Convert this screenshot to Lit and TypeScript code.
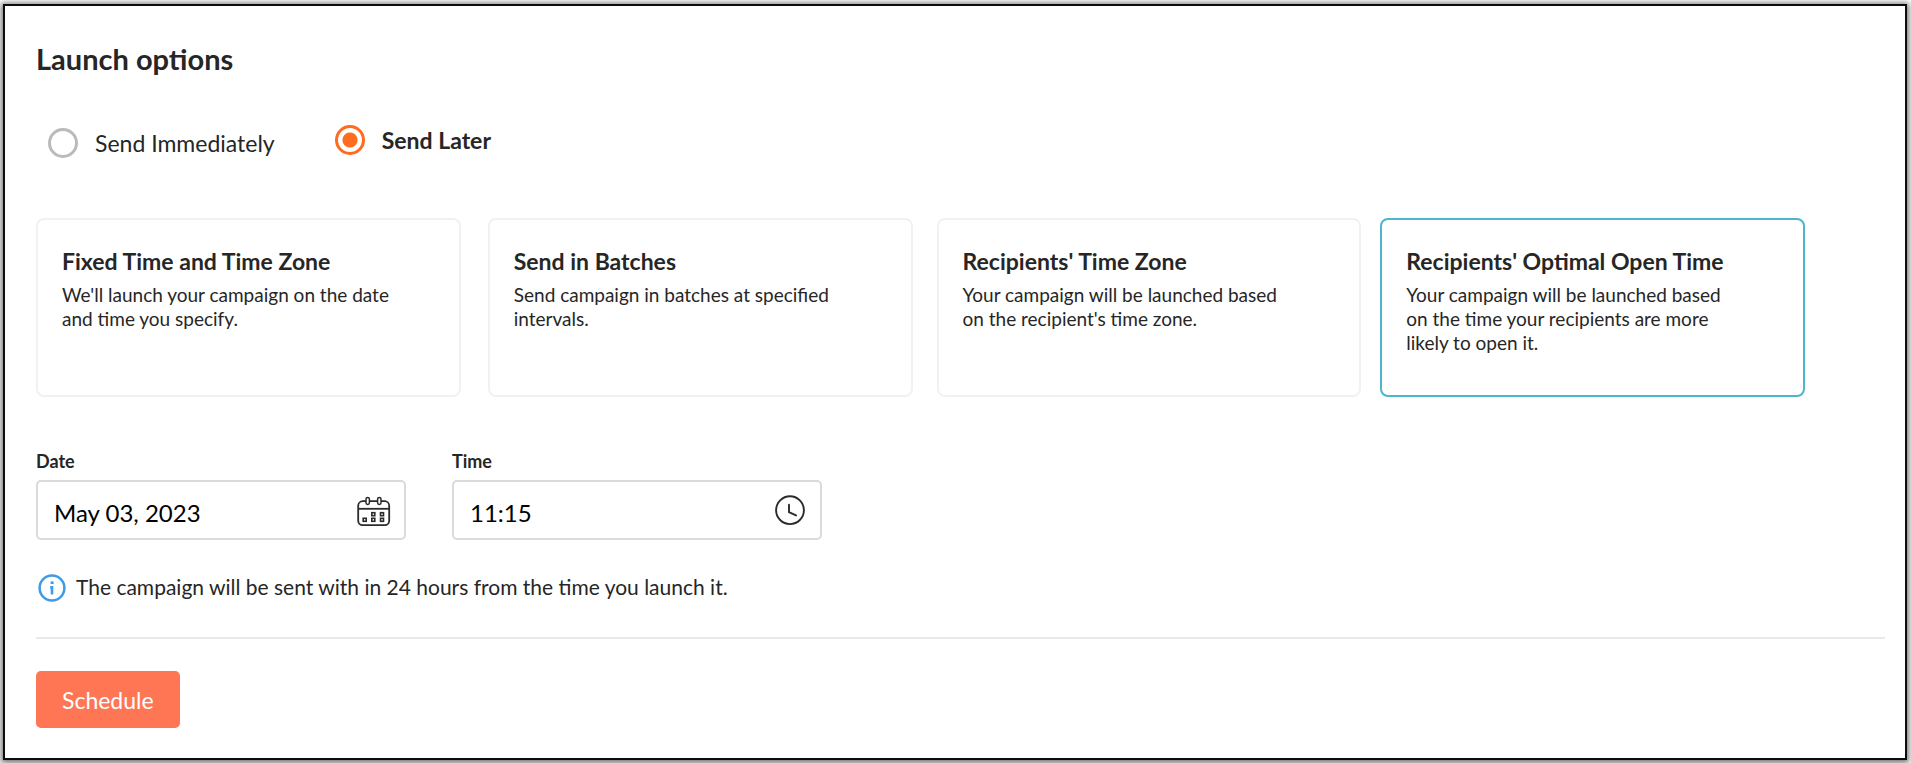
import { LitElement, html, css, svg } from "lit";
import { customElement, state } from "lit/decorators.js";
import { classMap } from "lit/directives/class-map.js";

interface LaunchMode {
  id: string;
  title: string;
  text: string;
}

const MODES: LaunchMode[] = [
  {
    id: "fixed",
    title: "Fixed Time and Time Zone",
    text: "We'll launch your campaign on the date and time you specify.",
  },
  {
    id: "batches",
    title: "Send in Batches",
    text: "Send campaign in batches at specified intervals.",
  },
  {
    id: "timezone",
    title: "Recipients' Time Zone",
    text: "Your campaign will be launched based on the recipient's time zone.",
  },
  {
    id: "optimal",
    title: "Recipients' Optimal Open Time",
    text: "Your campaign will be launched based on the time your recipients are more likely to open it.",
  },
];

const DAYS = [
  [16.3, 21.2],
  [25, 21.2],
  [7.7, 26.8],
  [16.3, 26.8],
  [25, 26.8],
];

const calendarIcon = html`
  <svg class="field-icon" viewBox="0 0 34 34" aria-hidden="true">
    <g fill="none" stroke="#2b2b2b" stroke-width="1.8">
      <rect x="1.2" y="8.2" width="31" height="24" rx="4.5" />
      <path d="M1.2 15.8H32.2" />
      <g fill="#fff" stroke-width="1.5">
        <rect x="9" y="4.4" width="3.4" height="7" rx="1.7" />
        <rect x="20.6" y="4.4" width="3.4" height="7" rx="1.7" />
      </g>
      ${DAYS.map(
        ([x, y]) => svg`<rect x=${x - 1.5} y=${y - 1.5} width="3" height="3" stroke-width="1.6" />`,
      )}
    </g>
  </svg>
`;

const clockIcon = html`
  <svg class="field-icon" viewBox="0 0 34 34" aria-hidden="true">
    <g fill="none" stroke="#2b2b2b" stroke-width="1.9" stroke-linecap="round">
      <circle cx="17" cy="17.2" r="13.9" />
      <path d="M16 11.8V19.2L23 22.4" />
    </g>
  </svg>
`;

const infoIcon = html`
  <svg class="info-icon" viewBox="0 0 28 28" aria-hidden="true">
    <circle cx="14" cy="14" r="12.4" fill="none" stroke="#3f9ae8" stroke-width="2.5" />
    <rect x="12.6" y="7.4" width="3" height="2.6" fill="#3f9ae8" />
    <path d="M12.2 13.4H14V20.6" fill="none" stroke="#3f9ae8" stroke-width="2.6" />
  </svg>
`;

@customElement("app-root")
export class AppRoot extends LitElement {
  @state() private when: "now" | "later" = "later";
  @state() private mode = "optimal";

  static styles = css`
    :host {
      display: block;
      font-family: Lato, "Liberation Sans", sans-serif;
      color: #262626;
      background: #fff;
      overflow: hidden;
    }
    * {
      box-sizing: border-box;
    }
    .panel {
      margin: 4px 4px 3px 3px;
      padding: 35px 20px 30px 31px;
      border: 2px solid #0c0c0c;
      background: #fff;
      box-shadow: 0 1px 6px 2px rgba(0, 0, 0, 0.55);
    }
    .heading {
      margin: 0;
      font-size: 29px;
      line-height: 36px;
      font-weight: 700;
    }
    .choices {
      display: flex;
      align-items: flex-start;
      flex-wrap: wrap;
      gap: 24px 49px;
      margin: 48px 0 0;
      padding: 0 0 0 9px;
      border: 0;
      min-height: 36px;
    }
    .choice {
      display: flex;
      align-items: center;
      gap: 17px;
      padding: 3px;
      font-size: 23px;
      line-height: 30px;
    }
    .choice.selected {
      padding: 0 8px;
      font-weight: 700;
    }
    .radio {
      appearance: none;
      flex: none;
      width: 30px;
      height: 30px;
      margin: 0;
      border: 3px solid #bababa;
      border-radius: 50%;
      background: #fff;
    }
    .radio:checked {
      border-color: #ff6b1f;
      background: radial-gradient(circle, #ff6b1f 7px, #fff 8px);
    }
    .modes {
      display: grid;
      grid-template-columns: 1fr 27px 1fr 24px 1fr 19px 1fr;
      margin: 57px 80px 0 0;
    }
    .mode {
      display: flex;
      flex-direction: column;
      gap: 8px;
      min-height: 179px;
      padding: 27px 60px 27px 24px;
      border: 2px solid #f1f1f1;
      border-radius: 8px;
      background: #fff;
      color: inherit;
      font: inherit;
      text-align: left;
      cursor: pointer;
    }
    .mode:nth-child(1) {
      grid-column: 1;
    }
    .mode:nth-child(2) {
      grid-column: 3;
    }
    .mode:nth-child(3) {
      grid-column: 5;
    }
    .mode:nth-child(4) {
      grid-column: 7;
    }
    .mode.selected {
      border-color: #4fb4cd;
    }
    .mode-title {
      font-size: 23px;
      line-height: 28px;
      font-weight: 700;
      white-space: nowrap;
    }
    .mode-text {
      font-size: 19px;
      line-height: 24px;
    }
    .fields {
      display: flex;
      flex-wrap: wrap;
      gap: 24px 46px;
      margin-top: 54px;
    }
    .field {
      display: flex;
      flex-direction: column;
      gap: 9px;
      width: 370px;
    }
    .label {
      font-size: 18px;
      line-height: 20px;
      font-weight: 700;
    }
    .box {
      display: flex;
      align-items: center;
      padding: 0 13px 0 16px;
      border: 2px solid #dadada;
      border-radius: 5px;
    }
    .input {
      flex: 1;
      min-width: 0;
      height: 56px;
      margin: 0;
      padding: 4px 0 0;
      border: 0;
      outline: 0;
      background: transparent;
      color: #000;
      font: inherit;
      font-size: 24px;
    }
    .field-icon {
      flex: none;
      width: 34px;
      height: 34px;
    }
    .note {
      display: flex;
      align-items: flex-end;
      gap: 10px;
      margin: 32px 0 0;
      padding-left: 2px;
      font-size: 21px;
      line-height: 30px;
    }
    .info-icon {
      flex: none;
      width: 28px;
      height: 28px;
    }
    .rule {
      height: 2px;
      margin: 35px 0 32px;
      border: 0;
      background: #e9e9e9;
    }
    .submit {
      display: block;
      height: 57px;
      padding: 0 26px;
      border: 0;
      border-radius: 5px;
      background: #ff7654;
      color: #fff;
      font: inherit;
      font-size: 23px;
      cursor: pointer;
    }
  `;

  private renderChoice(value: "now" | "later", label: string) {
    const selected = this.when === value;
    return html`
      <label class=${classMap({ choice: true, selected })}>
        <input
          class="radio"
          type="radio"
          name="when"
          .checked=${selected}
          @change=${() => (this.when = value)}
        />
        <span>${label}</span>
      </label>
    `;
  }

  render() {
    return html`
      <main class="panel">
        <h1 class="heading">Launch options</h1>
        <div class="choices" role="radiogroup" aria-label="Launch options">
          ${this.renderChoice("now", "Send Immediately")}
          ${this.renderChoice("later", "Send Later")}
        </div>
        <div class="modes">
          ${MODES.map(
            (m) => html`
              <button
                type="button"
                class=${classMap({ mode: true, selected: m.id === this.mode })}
                aria-pressed=${m.id === this.mode}
                @click=${() => (this.mode = m.id)}
              >
                <span class="mode-title">${m.title}</span>
                <span class="mode-text">${m.text}</span>
              </button>
            `,
          )}
        </div>
        <div class="fields">
          <div class="field">
            <label class="label" for="date">Date</label>
            <div class="box">
              <input class="input" id="date" type="text" value="May 03, 2023" />
              ${calendarIcon}
            </div>
          </div>
          <div class="field">
            <label class="label" for="time">Time</label>
            <div class="box">
              <input class="input" id="time" type="text" value="11:15" />
              ${clockIcon}
            </div>
          </div>
        </div>
        <p class="note">
          ${infoIcon}
          <span>The campaign will be sent with in 24 hours from the time you launch it.</span>
        </p>
        <hr class="rule" />
        <button class="submit" type="button">Schedule</button>
      </main>
    `;
  }
}
